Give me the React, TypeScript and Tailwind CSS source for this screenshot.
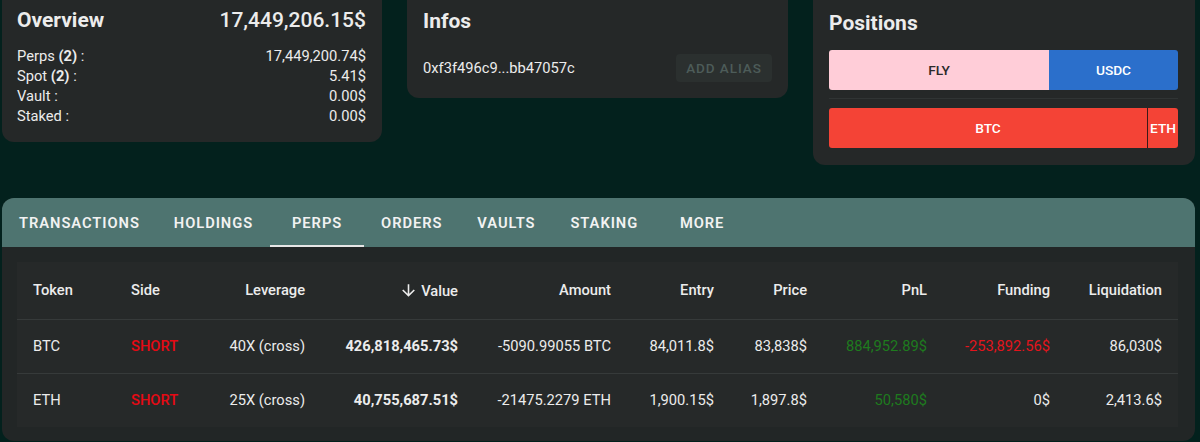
import React from "react";

const overviewRows = [
  { label: "Perps", count: "(2)", value: "17,449,200.74$" },
  { label: "Spot", count: "(2)", value: "5.41$" },
  { label: "Vault", count: "", value: "0.00$" },
  { label: "Staked", count: "", value: "0.00$" },
];

const tabs = ["Transactions", "Holdings", "Perps", "Orders", "Vaults", "Staking", "More"];

const columns = [
  { name: "Token", w: "w-[98px]", align: "text-left" },
  { name: "Side", w: "w-[98px]", align: "text-left" },
  { name: "Leverage", w: "w-[108px]", align: "text-right" },
  { name: "Value", w: "w-[153px]", align: "text-right" },
  { name: "Amount", w: "w-[153px]", align: "text-right" },
  { name: "Entry", w: "w-[103px]", align: "text-right" },
  { name: "Price", w: "w-[93px]", align: "text-right" },
  { name: "PnL", w: "w-[120px]", align: "text-right" },
  { name: "Funding", w: "w-[123px]", align: "text-right" },
  { name: "Liquidation", w: "w-[112px]", align: "text-right" },
];

const positions = [
  {
    token: "BTC",
    leverage: "40X (cross)",
    value: "426,818,465.73$",
    amount: "-5090.99055 BTC",
    entry: "84,011.8$",
    price: "83,838$",
    pnl: "884,952.89$",
    funding: "-253,892.56$",
    fundingRed: true,
    liq: "86,030$",
  },
  {
    token: "ETH",
    leverage: "25X (cross)",
    value: "40,755,687.51$",
    amount: "-21475.2279 ETH",
    entry: "1,900.15$",
    price: "1,897.8$",
    pnl: "50,580$",
    funding: "0$",
    fundingRed: false,
    liq: "2,413.6$",
  },
];

const ArrowDown = () => (
  <svg viewBox="0 0 24 24" className="w-[19px] h-[19px] mr-[3px]" fill="currentColor">
    <path d="M20 12l-1.41-1.41L13 16.17V4h-2v12.17l-5.58-5.59L4 12l8 8 8-8z" />
  </svg>
);

const App = () => {
  return (
    <div className="min-h-[442px] bg-[#03211d] text-[#ececec] overflow-hidden" style={{ fontFamily: "Roboto, 'Liberation Sans', sans-serif" }}>
      <div className="ml-[2px] w-[1193px]">
        {/* TOP CARDS */}
        <div className="flex items-start gap-[25px]">
          {/* OVERVIEW */}
          <div className="w-[380px] bg-[#252828] rounded-b-[12px] px-[15px] pt-[7px] pb-[16px]">
            <div className="flex items-center justify-between h-[28px] mr-[1px]">
              <h2 className="text-[21px] font-bold">Overview</h2>
              <span className="text-[21px] font-medium">17,449,206.15$</span>
            </div>
            <div className="mt-[11px] mr-[1px]">
              {overviewRows.map((row) => (
                <div key={row.label} className="flex justify-between text-[14.7px] leading-[20px]">
                  <span>
                    {row.label} {row.count && <span className="font-bold">{row.count}</span>} :
                  </span>
                  <span>{row.value}</span>
                </div>
              ))}
            </div>
          </div>

          {/* INFOS */}
          <div className="w-[381px] bg-[#252828] rounded-b-[12px] px-4 pt-[7px] pb-[16px]">
            <h2 className="text-[21px] font-bold h-[28px] leading-[28px]">Infos</h2>
            <div className="mt-[19px] flex items-center justify-between">
              <span className="text-[14.7px]">0xf3f496c9...bb47057c</span>
              <button className="h-[28px] w-[96px] rounded-[4px] bg-[#2b302f] text-[#4d5c59] text-[13.5px] font-medium tracking-[0.07em]">
                ADD ALIAS
              </button>
            </div>
          </div>

          {/* POSITIONS */}
          <div className="w-[382px] bg-[#252828] rounded-b-[12px] pl-4 pr-[17px] pt-[9px] pb-[17px]">
            <h2 className="text-[21px] font-bold h-[28px] leading-[28px]">Positions</h2>
            <div className="mt-[13px] flex h-[40px] text-[13.7px] font-medium">
              <div className="w-[220px] bg-[#ffcdd8] text-[#2a2a2a] rounded-l-[3px] flex items-center justify-center">FLY</div>
              <div className="flex-1 bg-[#2b6fcb] text-white rounded-r-[3px] flex items-center justify-center">USDC</div>
            </div>
            <div className="mt-[8px] h-px bg-[#303434]"></div>
            <div className="mt-[9px] flex h-[40px] text-[13.7px] font-medium text-white">
              <div className="flex-1 bg-[#f44336] rounded-l-[3px] flex items-center justify-center">BTC</div>
              <div className="w-[31px] bg-[#f44336] border-l border-[#3a1a18] rounded-r-[3px] flex items-center justify-center">ETH</div>
            </div>
          </div>
        </div>

        {/* TABS PANEL */}
        <div className="mt-[33px] rounded-[12px] bg-[#222626] overflow-hidden">
          <div className="flex bg-[#4e7470] h-[49px]">
            {tabs.map((tab) => (
              <div
                key={tab}
                className={`relative min-w-[94px] px-[17px] flex items-center justify-center text-[14.7px] font-semibold uppercase tracking-[0.065em] text-[#f2f2f2] pt-[1px] ${
                  tab === "Perps" ? "after:absolute after:left-0 after:right-0 after:bottom-0 after:h-[2px] after:bg-[#e6e6e6]" : ""
                }`}
              >
                {tab}
              </div>
            ))}
          </div>

          <div className="px-[15px] pt-[15px] pb-[14px]">
            <table className="w-[1161px] table-fixed bg-[#262929] text-[14.7px] whitespace-nowrap">
              <colgroup>
                {columns.map((c) => (
                  <col key={c.name} className={c.w} />
                ))}
              </colgroup>
              <thead>
                <tr className="h-[57px] border-b border-[#363a3a]">
                  {columns.map((c) => (
                    <th key={c.name} className={`px-4 font-medium ${c.align}`}>
                      {c.name === "Value" ? (
                        <span className="inline-flex items-center justify-end align-middle">
                          <ArrowDown />
                          Value
                        </span>
                      ) : (
                        c.name
                      )}
                    </th>
                  ))}
                </tr>
              </thead>
              <tbody>
                {positions.map((p, i) => (
                  <tr key={p.token} className={`h-[54px] ${i === 0 ? "border-b border-[#363a3a]" : ""}`}>
                    <td className="px-4">{p.token}</td>
                    <td className="px-4 font-medium text-[#e50914]">SHORT</td>
                    <td className="px-4 text-right">{p.leverage}</td>
                    <td className="px-4 text-right font-bold">{p.value}</td>
                    <td className="px-4 text-right">{p.amount}</td>
                    <td className="px-4 text-right">{p.entry}</td>
                    <td className="px-4 text-right">{p.price}</td>
                    <td className="px-4 text-right text-[#1e7b1e]">{p.pnl}</td>
                    <td className={`px-4 text-right ${p.fundingRed ? "text-[#e3141c]" : ""}`}>{p.funding}</td>
                    <td className="px-4 text-right">{p.liq}</td>
                  </tr>
                ))}
              </tbody>
            </table>
          </div>
        </div>
      </div>
    </div>
  );
};

export default App;
